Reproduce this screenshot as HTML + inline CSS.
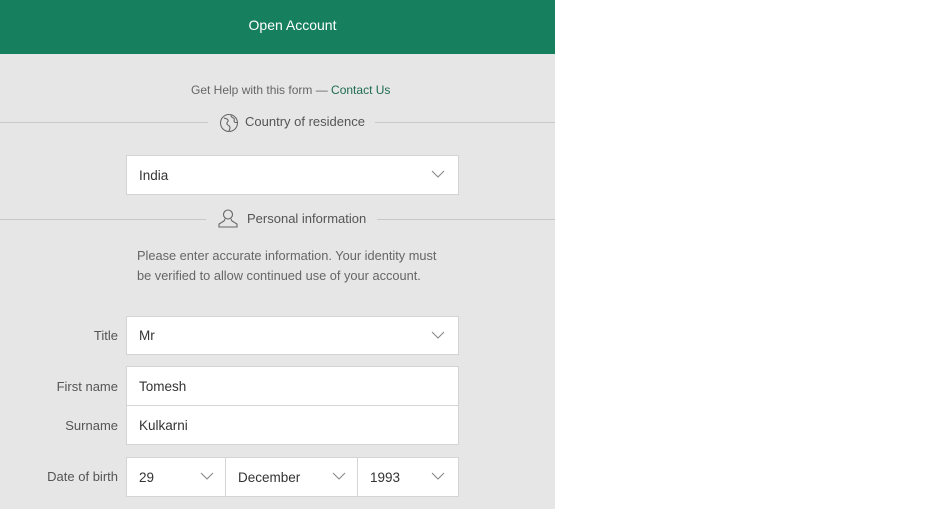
<!DOCTYPE html>
<html><head><style>
body{margin:0;width:947px;height:509px;background:#fff;font-family:"Segoe UI","Liberation Sans",sans-serif;position:relative;overflow:hidden}
.panel{position:absolute;left:0;top:0;width:555px;height:509px;background:#e6e6e6}
.hdr{position:absolute;left:0;top:0;width:555px;height:54px;background:#157f5e;color:#fff;font-size:14px;text-align:center;line-height:50px;box-sizing:border-box;padding-left:30px}
.t{position:absolute;font-size:13px;color:#555;white-space:nowrap}
.line{position:absolute;height:1px;background:#c8c8c8}
.box{position:absolute;background:#fff;border:1px solid #d4d4d4;box-sizing:border-box;font-size:13.5px;color:#333;padding-left:12px}
.chev{position:absolute;top:50%;margin-top:-5px}
.lbl{position:absolute;font-size:13px;color:#555;text-align:right;width:118px;left:0}
</style></head><body>
<div class="panel">
<div class="hdr">Open Account</div>
<div class="t" style="left:191px;top:83px;font-size:12px;color:#666">Get Help with this form — <span style="color:#1e6b52">Contact Us</span></div>
<div class="line" style="left:0;top:122px;width:208px"></div>
<div class="line" style="left:375px;top:122px;width:180px"></div>
<svg style="position:absolute;left:219px;top:113px" width="20" height="20" viewBox="0 0 20 20" fill="none" stroke="#666" stroke-width="1.1"><circle cx="10" cy="10" r="8.5"/><path d="M5 5c2 1 3 0 4 2s-2 2-1 4 3 1 3 4l-1 3M12 2.5c0 2 2 2 3 3s-1 3 1 4l2 0"/></svg>
<div class="t" style="left:245px;top:114px">Country of residence</div>
<div class="box" style="left:126px;top:155px;width:333px;height:40px;line-height:40px">India<svg class="chev" style="right:13px" width="14" height="9"><path d="M1 1l6 6 6-6" fill="none" stroke="#888" stroke-width="1.1"/></svg></div>
<div class="line" style="left:0;top:219px;width:206px"></div>
<div class="line" style="left:377px;top:219px;width:178px"></div>
<svg style="position:absolute;left:218px;top:208px" width="20" height="20" viewBox="0 0 20 20" fill="none" stroke="#666" stroke-width="1.1"><circle cx="10" cy="6.5" r="4.5"/><path d="M7 11l-1 2-5 3v3h18v-3l-5-3-1-2"/></svg>
<div class="t" style="left:247px;top:211px">Personal information</div>
<div class="t" style="left:137px;top:246px;line-height:20px;color:#666;font-size:12.8px">Please enter accurate information. Your identity must<br>be verified to allow continued use of your account.</div>
<div class="lbl" style="top:328px">Title</div>
<div class="box" style="left:126px;top:316px;width:333px;height:39px;line-height:38px">Mr<svg class="chev" style="right:13px" width="14" height="9"><path d="M1 1l6 6 6-6" fill="none" stroke="#888" stroke-width="1.1"/></svg></div>
<div class="lbl" style="top:379px">First name</div>
<div class="lbl" style="top:418px">Surname</div>
<div class="box" style="left:126px;top:366px;width:333px;height:40px;line-height:39px">Tomesh</div>
<div class="box" style="left:126px;top:405px;width:333px;height:40px;line-height:39px">Kulkarni</div>
<div class="lbl" style="top:469px">Date of birth</div>
<div class="box" style="left:126px;top:457px;width:100px;height:40px;line-height:39px">29<svg class="chev" style="right:11px" width="14" height="9"><path d="M1 1l6 6 6-6" fill="none" stroke="#888" stroke-width="1.1"/></svg></div>
<div class="box" style="left:225px;top:457px;width:133px;height:40px;line-height:39px">December<svg class="chev" style="right:11px" width="14" height="9"><path d="M1 1l6 6 6-6" fill="none" stroke="#888" stroke-width="1.1"/></svg></div>
<div class="box" style="left:357px;top:457px;width:102px;height:40px;line-height:39px">1993<svg class="chev" style="right:13px" width="14" height="9"><path d="M1 1l6 6 6-6" fill="none" stroke="#888" stroke-width="1.1"/></svg></div>
</div>
</body></html>
